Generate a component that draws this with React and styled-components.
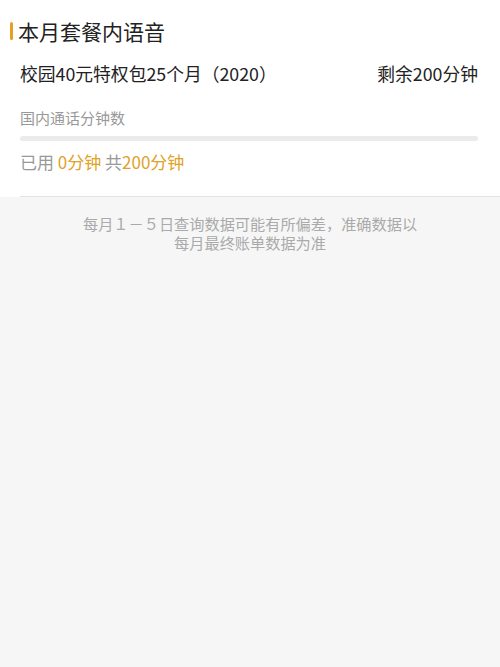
import React from 'react';
import styled, { createGlobalStyle } from 'styled-components';

const GlobalStyle = createGlobalStyle`
  html, body {
    margin: 0;
    padding: 0;
    background: #f6f6f6;
    font-family: "Noto Sans CJK SC", "Noto Sans", sans-serif;
  }
`;

const Page = styled.div`
  min-height: 667px;
  background: #f6f6f6;
`;

const Card = styled.section`
  background: #fff;
  padding: 0 22px 0 20px;
  margin: 0;
`;

const Header = styled.div`
  display: flex;
  align-items: center;
  height: 62px;
  margin-left: -10px;
`;

const Accent = styled.span`
  display: block;
  width: 3px;
  height: 18px;
  border-radius: 2px;
  background: #e8a021;
  margin-right: 5px;
`;

const Title = styled.h1`
  margin: 0;
  font-size: 21px;
  font-weight: 400;
  color: #222;
  line-height: 1;
`;

const PlanRow = styled.div`
  display: flex;
  justify-content: space-between;
  align-items: center;
  height: 22px;
  font-size: 17.8px;
  color: #222;
`;

const Label = styled.div`
  margin-top: 23px;
  font-size: 15px;
  color: #999;
  line-height: 22px;
`;

const Track = styled.div`
  margin-top: 7px;
  height: 5px;
  border-radius: 3px;
  background: #ebebeb;
`;

const Usage = styled.div`
  margin-top: 9px;
  font-size: 17px;
  color: #999;
  line-height: 24px;
  padding-bottom: 22px;
  border-bottom: 1px solid #e3e3e3;
  margin-right: -22px;
`;

const Amount = styled.span`
  color: #e0a22a;
`;

const Note = styled.div`
  margin-top: 17px;
  display: flex;
  flex-direction: column;
  align-items: center;
  gap: 0;
  font-size: 15.2px;
  line-height: 19px;
  color: #aaa;
`;

const NoteLine = styled.span`
  display: block;
  height: 19px;
`;

const App = () => (
  <Page>
    <GlobalStyle />
    <Card>
      <Header>
        <Accent />
        <Title>本月套餐内语音</Title>
      </Header>
      <PlanRow>
        <span>校园40元特权包25个月（2020）</span>
        <span>剩余200分钟</span>
      </PlanRow>
      <Label>国内通话分钟数</Label>
      <Track />
      <Usage>
        已用 <Amount>0分钟</Amount> 共<Amount>200分钟</Amount>
      </Usage>
    </Card>
    <Note>
      <NoteLine>每月１－５日查询数据可能有所偏差，准确数据以</NoteLine>
      <NoteLine>每月最终账单数据为准</NoteLine>
    </Note>
  </Page>
);

export default App;
